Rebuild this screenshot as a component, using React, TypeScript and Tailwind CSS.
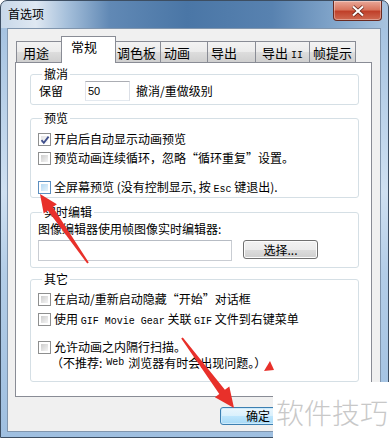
import React from "react";

const CJK = "font-['Noto_Sans_CJK_SC','Noto_Sans',sans-serif]";
const MONO = "font-['Liberation_Mono',monospace] text-[10px]";

function Cb({ checked = false, hot = false }: { checked?: boolean; hot?: boolean }) {
  return (
    <span
      className={`relative flex h-[13px] w-[13px] shrink-0 items-center justify-center border ${
        hot ? "border-[#5c8fc0]" : "border-[#8e8f8f]"
      } bg-white p-[2px]`}
    >
      <span
        className={`block h-full w-full ${
          hot
            ? "bg-[linear-gradient(135deg,#b4d8f2,#e6f4fc)]"
            : checked
            ? "bg-[linear-gradient(135deg,#e4e4e4,#fafafa)]"
            : "bg-[linear-gradient(135deg,#cdcdcd,#f4f4f4)]"
        }`}
      />
      {checked && (
        <svg className="absolute left-[1px] top-[1px]" width="10" height="10" viewBox="0 0 10 10">
          <path d="M1.5 5.2 L3.8 7.8 L8.6 1.6" stroke="#3f4f8c" strokeWidth="1.8" fill="none" />
        </svg>
      )}
    </span>
  );
}

function Group({
  label,
  className,
  children,
}: {
  label: string;
  className: string;
  children?: React.ReactNode;
}) {
  return (
    <fieldset
      className={`w-[329px] rounded-[3px] border border-[#d5dfe5] pl-[7px] ${className}`}
    >
      <legend className="ml-[4px] px-[2px] text-[12px] leading-[14px]">{label}</legend>
      {children}
    </fieldset>
  );
}

function Tab({ label, w, pl, active = false }: { label: React.ReactNode; w: string; pl: string; active?: boolean }) {
  if (active) {
    return (
      <div
        className={`relative z-10 -mx-[2px] mb-[-1px] h-[27px] ${w} ${pl} border border-b-0 border-[#898c95] bg-white pt-[2px] text-[13px] leading-[16px]`}
      >
        {label}
      </div>
    );
  }
  return (
    <div
      className={`h-[21px] ${w} ${pl} border border-b-0 border-l-0 first:border-l border-[#898c95] bg-[linear-gradient(#f3f3f3,#ebebeb_50%,#dddddd_51%,#cfcfcf)] pt-[3px] text-[13px] leading-[16px]`}
    >
      {label}
    </div>
  );
}

export default function App() {
  return (
    <div className={`relative h-[441px] w-[389px] overflow-hidden bg-white text-black ${CJK}`}>
      <div className="flex h-[438px] w-full flex-col rounded-t-[7px] border border-[#3d4e62] bg-[linear-gradient(90deg,#c8d8e9_0%,#dfe8f2_9%,#a6c0db_17%,#6189b5_28%,#4a76a6_48%,#5882b0_70%,#86a9cd_88%,#a9c4df_100%)]">
        {/* title bar */}
        <div className="flex h-[27px] shrink-0 items-start">
          <div className="pl-[7px] pt-[5px] text-[12px] leading-[16px] text-black">首选项</div>
          <div className="ml-auto mr-[6px] flex h-[20px] w-[49px] items-center justify-center rounded-b-[4px] border border-t-0 border-[#6a2a20] bg-[linear-gradient(#e9a899,#d9765f_45%,#c0402a_55%,#cf6a52)] shadow-[inset_0_0_0_1px_rgba(255,255,255,0.35)]">
            <svg width="14" height="12" viewBox="0 0 14 12">
              <path d="M2 1.5 L12 10.5 M12 1.5 L2 10.5" stroke="#5a1a10" strokeWidth="3.6" />
              <path d="M2 1.5 L12 10.5 M12 1.5 L2 10.5" stroke="#ffffff" strokeWidth="2.2" />
            </svg>
          </div>
        </div>
        {/* side strips + client */}
        <div className="flex min-h-0 flex-1 bg-[linear-gradient(#a6c3e1,#cfe0f1_40%,#b3cde7_60%,#9fbfe0)]">
          <div className="ml-[6px] mr-[7px] mb-[5px] flex flex-1 flex-col border border-[#8095ad] bg-[#f0f0f0] pl-[7px] pt-[7px]">
            {/* tabs */}
            <div className="flex h-[26px] items-end pl-[1px]">
              <Tab label="用途" w="w-[47px]" pl="pl-[6px]" />
              <Tab label="常规" w="w-[55px]" pl="pl-[9px]" active />
              <Tab label="调色板" w="w-[47px]" pl="pl-[3px]" />
              <Tab label="动画" w="w-[47px]" pl="pl-[3px]" />
              <Tab label="导出" w="w-[48px]" pl="pl-[3px]" />
              <Tab
                label={
                  <span>
                    导出 <span className={MONO}>II</span>
                  </span>
                }
                w="w-[54px]"
                pl="pl-[6px]"
              />
              <Tab label="帧提示" w="w-[46px]" pl="pl-[3px]" />
            </div>
            {/* panel */}
            <div className="flex h-[335px] w-[357px] flex-col border border-[#898c95] bg-white pl-[14px]">
              <Group label="撤消" className="mt-[4px] h-[38px]">
                <div className="flex h-[20px] items-center text-[12px]">
                  <span className="w-[47px] pl-[1px]">保留</span>
                  <div className="flex h-[20px] w-[45px] items-center border border-[#abadb3] border-b-[#e3e9ef] border-l-[#e2e3ea] border-r-[#dbdfe6] bg-white pl-[2px] font-['Liberation_Sans',sans-serif] text-[11px]">
                    50
                  </div>
                  <span className="ml-[6px]">撤消/重做级别</span>
                </div>
              </Group>

              <Group label="预览" className="mt-[6px] h-[87px]">
                <div className="mt-[6px] flex h-[16px] items-center gap-[3px] text-[12px]">
                  <Cb checked />
                  <span>开启后自动显示动画预览</span>
                </div>
                <div className="mt-[3px] flex h-[16px] items-center gap-[3px] text-[12px]">
                  <Cb />
                  <span>预览动画连续循环，忽略“循环重复”设置。</span>
                </div>
                <div className="mt-[13px] flex h-[16px] items-center gap-[3px] text-[12px]">
                  <Cb hot />
                  <span>
                    全屏幕预览 (没有控制显示, 按 <span className={MONO}>Esc</span> 键退出).
                  </span>
                </div>
              </Group>

              <Group label="实时编辑" className="mt-[7px] h-[63px]">
                <div className="mt-[2px] flex h-[16px] items-center text-[12px]">
                  图像编辑器使用帧图像实时编辑器:
                </div>
                <div className="mt-[3px] flex items-start">
                  <div className="h-[21px] w-[194px] border border-[#c9cdd3] border-t-[#b7bcc4] bg-white" />
                  <div className="ml-[11px] flex h-[19px] w-[75px] items-center justify-center rounded-[3px] border border-[#707070] bg-[linear-gradient(#f2f2f2,#ebebeb_50%,#dddddd_51%,#cfcfcf)] text-[12px] shadow-[inset_0_0_0_1px_#fcfcfc]">
                    选择...
                  </div>
                </div>
              </Group>

              <Group label="其它" className="mt-[4px] h-[110px]">
                <div className="mt-[5px] flex h-[16px] items-center gap-[3px] text-[12px]">
                  <Cb />
                  <span>在启动/重新启动隐藏“开始”对话框</span>
                </div>
                <div className="mt-[4px] flex h-[16px] items-center gap-[3px] text-[12px]">
                  <Cb />
                  <span>
                    使用 <span className={MONO}>GIF Movie Gear</span> 关联 <span className={MONO}>GIF</span> 文件到右键菜单
                  </span>
                </div>
                <div className="mt-[13px] flex h-[14px] items-center gap-[3px] text-[12px] leading-[14px]">
                  <Cb />
                  <span>允许动画之内隔行扫描。</span>
                </div>
                <div className="mt-[2px] flex h-[13px] items-center pl-[13px] text-[12px] leading-[13px]">
                  （不推荐: <span className={`${MONO} mx-[4px]`}>Web</span>浏览器有时会出现问题。）
                </div>
              </Group>
            </div>
            {/* bottom buttons */}
            <div className="mt-[10px] flex pl-[205px]">
              <div className="flex h-[18px] w-[76px] items-center justify-center rounded-[3px] border border-[#3c7fb1] bg-[linear-gradient(#eaf6fd,#d9f0fc_50%,#bee6fd_51%,#a7d9f5)] text-[12px] shadow-[inset_0_0_0_1px_#cdeafb]">
                确定
              </div>
            </div>
          </div>
        </div>
      </div>

      {/* watermark */}
      <div className="absolute left-[273px] top-[382px] flex h-[59px] w-[116px] items-center bg-white pl-[3px] font-['Noto_Sans_CJK_SC',sans-serif] text-[28px] font-light leading-[30px] text-[#c8c8c8]">
        软件技巧
      </div>

      {/* red arrows */}
      <svg className="pointer-events-none absolute left-0 top-0" width="389" height="441" viewBox="0 0 389 441">
        <polygon
          points="40,194 56.9,204.2 52.8,207.1 88.8,262.4 87.2,263.6 47.8,210.5 43.7,213.4"
          fill="#e8302a"
        />
        <polygon
          points="234,408 229.3,386.5 224.9,389.8 182.8,337.4 181.2,338.6 219.3,394 214.9,397.3"
          fill="#e8302a"
        />
        <polygon points="270,361 264,371 274,370" fill="#e8302a" />
      </svg>
    </div>
  );
}
